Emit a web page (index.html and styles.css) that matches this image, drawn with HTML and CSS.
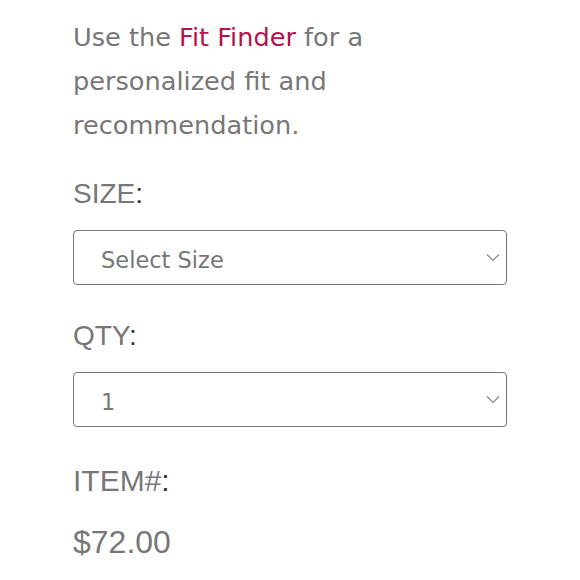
FILE: index.html
```html
<!DOCTYPE html>
<html>
<head>
<meta charset="utf-8">
<link rel="stylesheet" href="styles.css">
</head>
<body>
<div class="panel">
  <p class="intro">Use the <a class="link" href="#">Fit Finder</a> for a personalized fit and recommendation.</p>
  <div class="field">
    <div class="label">SIZE<span class="colon">:</span></div>
    <div class="select">
      <span class="value">Select Size</span>
      <svg class="chev" width="14" height="9" viewBox="0 0 14 9"><path d="M1 1.5 L7 7.5 L13 1.5" fill="none" stroke="#888" stroke-width="1.2"/></svg>
    </div>
  </div>
  <div class="field qty">
    <div class="label">QTY<span class="colon">:</span></div>
    <div class="select">
      <span class="value">1</span>
      <svg class="chev" width="14" height="9" viewBox="0 0 14 9"><path d="M1 1.5 L7 7.5 L13 1.5" fill="none" stroke="#888" stroke-width="1.2"/></svg>
    </div>
  </div>
  <div class="label item">ITEM#<span class="colon">:</span></div>
  <div class="price">$72.00</div>
</div>
</body>
</html>
```

FILE: styles.css
```css
html, body {
  margin: 0;
  padding: 0;
  background: #fff;
}
.panel {
  padding: 15px 0 0 73px;
  width: 434px;
  display: flex;
  flex-direction: column;
}
.intro {
  margin: 0;
  font-family: "DejaVu Sans", sans-serif;
  font-size: 25.6px;
  line-height: 44px;
  color: #777;
  width: 320px;
}
.link {
  color: #b3124b;
  text-decoration: none;
}
.field {
  display: flex;
  flex-direction: column;
  margin-top: 32px;
}
.field.qty {
  margin-top: 36px;
}
.label {
  font-family: "Liberation Sans", Arial, sans-serif;
  font-size: 28px;
  line-height: 30px;
  color: #777;
}
.colon {
  color: #333;
}
.select {
  margin-top: 21px;
  height: 55px;
  box-sizing: border-box;
  border: 1.5px solid #777;
  border-radius: 4px;
  display: flex;
  align-items: center;
  justify-content: space-between;
  padding: 0 6px 0 27px;
}
.value {
  font-family: "DejaVu Sans", sans-serif;
  font-size: 22.5px;
  color: #777;
  padding-top: 4px;
}
.chev {
  display: block;
}
.item {
  margin-top: 39px;
  font-size: 30px;
}
.price {
  font-family: "Liberation Sans", Arial, sans-serif;
  font-size: 32px;
  line-height: 36px;
  color: #777;
  margin-top: 28px;
}
```
